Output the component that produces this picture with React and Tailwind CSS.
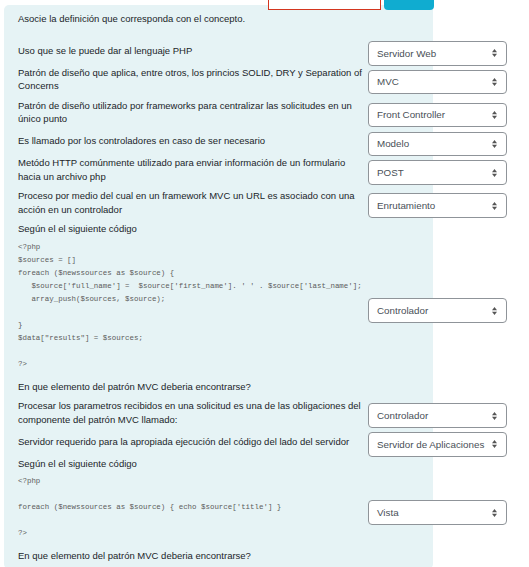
// App.jsx
// Matching exercise: definitions on the left, answer dropdowns on the right.

const code1 = [
  "<?php",
  "$sources = []",
  "foreach ($newssources as $source) {",
  "   $source['full_name'] =  $source['first_name']. ' ' . $source['last_name'];",
  "   array_push($sources, $source);",
  "",
  "}",
  '$data["results"] = $sources;',
  "",
  "?>",
];

const code2 = [
  "<?php",
  "",
  "foreach ($newssources as $source) { echo $source['title'] }",
  "",
  "?>",
];

function FakeSelect({ value }) {
  return (
    <div className="ml-[4px] w-[139px] h-[24.5px] shrink-0 flex items-center justify-between pl-[8px] pr-[9px] bg-white border border-[#8f9499] rounded-[4px] text-[#495057] text-[9.8px]">
      <span className="whitespace-nowrap">{value}</span>
      <svg width="5" height="8" viewBox="0 0 5 8" className="shrink-0">
        <path d="M0 3.2 L2.5 0 L5 3.2 Z" fill="#555" />
        <path d="M0 4.8 L2.5 8 L5 4.8 Z" fill="#555" />
      </svg>
    </div>
  );
}

function Row({ children, value }) {
  return (
    <div className="flex items-center">
      <div className="w-[346px] shrink-0 mb-[6px]">{children}</div>
      <FakeSelect value={value} />
    </div>
  );
}

function Code({ lines }) {
  return (
    <div className="mt-[5px] mb-[9px] font-['Liberation_Mono',monospace] text-[7.45px] leading-[13px] text-[#5c5c5c] whitespace-pre">
      {lines.map((l, i) => (
        <div key={i} className="h-[13px]">{l}</div>
      ))}
    </div>
  );
}

export default function App() {
  return (
    <div className="min-h-screen bg-white overflow-hidden font-['Liberation_Sans',Arial,sans-serif] text-[9.5px] leading-[13.5px] text-[#212529]">
      {/* top toolbar, mostly scrolled out of view */}
      <div className="relative z-10 w-[434px] -mt-[20px] flex justify-end gap-[3px]">
        <div className="w-[113px] h-[30px] bg-white border border-[#d4361f]" />
        <div className="w-[50px] h-[30px] rounded-[4px] bg-[#10acd0] text-white text-[9.8px] flex items-end justify-center pb-[7px] leading-[12px]">
          Ocultar
        </div>
      </div>

      {/* question panel */}
      <div className="ml-[4px] -mt-[5px] w-[429px] bg-[#e6f3f5] rounded-[5px] pl-[14px] pt-[7px]">
        <p className="mb-[15.5px]">Asocie la definición que corresponda con el concepto.</p>

        <Row value="Servidor Web">Uso que se le puede dar al lenguaje PHP</Row>
        <Row value="MVC">
          Patrón de diseño que aplica, entre otros, los princios SOLID, DRY y Separation of Concerns
        </Row>
        <Row value="Front Controller">
          Patrón de diseño utilizado por frameworks para centralizar las solicitudes en un único punto
        </Row>
        <Row value="Modelo">Es llamado por los controladores en caso de ser necesario</Row>
        <Row value="POST">
          Metódo HTTP comúnmente utilizado para enviar información de un formulario hacia un archivo php
        </Row>
        <Row value="Enrutamiento">
          Proceso por medio del cual en un framework MVC un URL es asociado con una acción en un controlador
        </Row>
        <Row value="Controlador">
          <p>Según el el siguiente código</p>
          <Code lines={code1} />
          <p>En que elemento del patrón MVC deberia encontrarse?</p>
        </Row>
        <Row value="Controlador">
          Procesar los parametros recibidos en una solicitud es una de las obligaciones del componente del patrón MVC llamado:
        </Row>
        <Row value="Servidor de Aplicaciones">
          Servidor requerido para la apropiada ejecución del código del lado del servidor
        </Row>
        <Row value="Vista">
          <p>Según el el siguiente código</p>
          <Code lines={code2} />
          <p>En que elemento del patrón MVC deberia encontrarse?</p>
        </Row>
      </div>
    </div>
  );
}
